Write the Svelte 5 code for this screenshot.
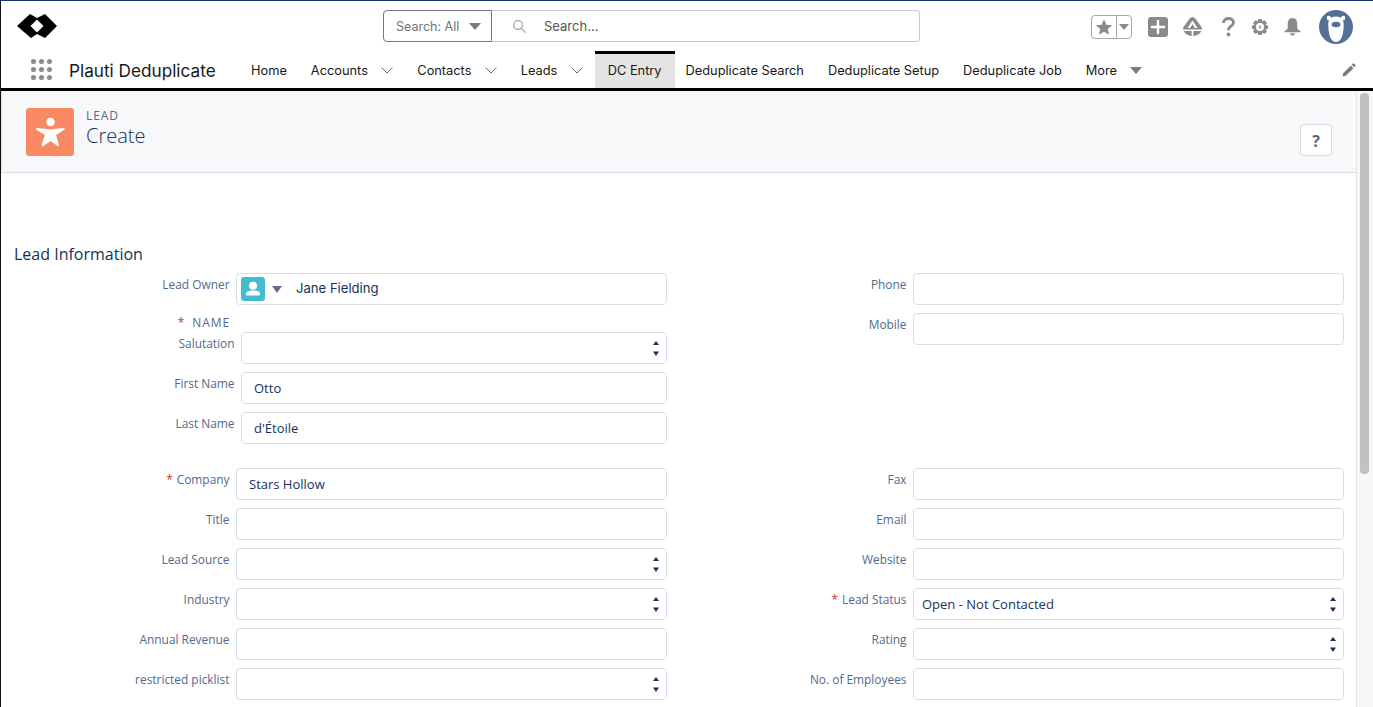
<script>
  const nav = [
    { label: 'Home' },
    { label: 'Accounts', menu: true },
    { label: 'Contacts', menu: true },
    { label: 'Leads', menu: true },
    { label: 'DC Entry', active: true },
    { label: 'Deduplicate Search' },
    { label: 'Deduplicate Setup' },
    { label: 'Deduplicate Job' }
  ]

  const topLeft = [
    { label: 'Salutation', select: true },
    { label: 'First Name', value: 'Otto' },
    { label: 'Last Name', value: "d'Étoile" }
  ]

  const lower = [
    [
      { label: 'Company', value: 'Stars Hollow', required: true },
      { label: 'Title' },
      { label: 'Lead Source', select: true },
      { label: 'Industry', select: true },
      { label: 'Annual Revenue' },
      { label: 'restricted picklist', select: true }
    ],
    [
      { label: 'Fax' },
      { label: 'Email' },
      { label: 'Website' },
      { label: 'Lead Status', value: 'Open - Not Contacted', select: true, required: true },
      { label: 'Rating', select: true },
      { label: 'No. of Employees' }
    ]
  ]
</script>

{#snippet field(f)}
  <div class="row">
    <div class="label">
      {#if f.required}<span class="req">*</span>{/if}{f.label}
    </div>
    <div class="input" class:select={f.select}>
      {f.value ?? ''}
      {#if f.select}
        <svg class="updown" viewBox="0 0 6 15" width="6" height="15">
          <path d="M3 0 L6 4 H0 Z M0 10.500 H6 L3 15 Z" fill="#16325c" />
        </svg>
      {/if}
    </div>
  </div>
{/snippet}

<div class="app">
  <header class="global">
    <svg class="logo" viewBox="0 0 40 24" width="40" height="24">
      <path d="M0 12 L13 0 L20 4 L28 0 L40 12 L28 24 L20 20 L14 24 Z" fill="#000" />
      <path d="M20 5.500 L26.500 12 L20 18.500 L13.500 12 Z" fill="#fff" />
    </svg>

    <div class="search">
      <div class="scope">Search: All <span class="tri"></span></div>
      <div class="box">
        <svg viewBox="0 0 16 16" width="15" height="15" fill="none" stroke="#a8a8a8" stroke-width="1.400">
          <circle cx="6.500" cy="6.500" r="4.700" />
          <path d="M10 10 L14.500 14.500" />
        </svg>
        <span>Search...</span>
      </div>
    </div>

    <div class="tools">
      <div class="fav">
        <span class="fav-star">
          <svg viewBox="0 0 20 20" width="18" height="18">
            <path d="M10 1.500 L12.600 7.500 L19 8 L14.200 12.200 L15.700 18.500 L10 15.200 L4.300 18.500 L5.800 12.200 L1 8 L7.400 7.500 Z" fill="#8a8a8a" />
          </svg>
        </span>
        <span class="fav-drop"><span class="tri small"></span></span>
      </div>
      <svg class="plus" viewBox="0 0 20 20" width="20" height="20">
        <rect width="20" height="20" rx="3" fill="#8a8a8a" />
        <path d="M10 4 V16 M4 10 H16" stroke="#fff" stroke-width="2.400" stroke-linecap="round" />
      </svg>
      <svg class="trail" viewBox="0 0 19 19" width="19" height="19">
        <path d="M9.500 0 Q11 0 12.500 1.800 L17.800 9 Q19.200 11.200 19 12.600 H0 Q-0.200 11.200 1.200 9 L6.500 1.800 Q8 0 9.500 0 Z" fill="#8a8a8a" />
        <path d="M9.500 3.500 L14.500 11 H4.500 Z" fill="#fff" />
        <path d="M9.500 7 L11.800 11 H7.200 Z" fill="#8a8a8a" />
        <path d="M0.500 14 H8.500 L8.800 19 Q3 18.500 0.500 14 Z M10.500 14 H18.500 Q16 18.500 10.200 19 Z" fill="#8a8a8a" />
      </svg>
      <svg class="help" viewBox="0 0 13 20" width="13" height="20">
        <path d="M1.500 6 C1.500 3 3.800 1.500 6.500 1.500 C9.300 1.500 11.500 3 11.500 5.500 C11.500 7.800 9.800 8.600 8.300 9.700 C7 10.700 6.500 11.500 6.500 13.200" fill="none" stroke="#8a8a8a" stroke-width="2.800" />
        <circle cx="6.500" cy="17.500" r="1.900" fill="#8a8a8a" />
      </svg>
      <svg class="gear" viewBox="0 0 20 20" width="18" height="18">
        <path d="M8 1 H12 L12.500 3.600 L15 2.500 L17.800 5.500 L16.300 7.800 L19 8.500 V12 L16.300 12.500 L17.800 15 L15 17.800 L12.500 16.500 L12 19 H8 L7.500 16.500 L5 17.800 L2.200 15 L3.700 12.500 L1 12 V8.500 L3.700 7.800 L2.200 5.500 L5 2.500 L7.500 3.600 Z" fill="#8a8a8a" />
        <circle cx="10" cy="10" r="4.500" fill="#fff" />
        <path d="M11 6.800 L8.200 10.500 H10 L9 13.200 L11.800 9.500 H10 Z" fill="#8a8a8a" />
      </svg>
      <svg class="bell" viewBox="0 0 20 20" width="19" height="19">
        <path d="M10 1 C13.500 1 15 4 15 7 V11 C15 13 17 14 18.500 15 V16 H1.500 V15 C3 14 5 13 5 11 V7 C5 4 6.500 1 10 1 Z M7.500 17 H12.500 C12.500 18.500 11.200 19.500 10 19.500 C8.800 19.500 7.500 18.500 7.500 17 Z" fill="#8a8a8a" />
      </svg>
      <svg class="avatar" viewBox="0 0 34 34" width="34" height="34">
        <circle cx="17" cy="17" r="17" fill="#557096" />
        <circle cx="9.800" cy="8" r="2.200" fill="#fff" />
        <circle cx="24.200" cy="8" r="2.200" fill="#fff" />
        <path d="M17 6.500 C23 6.500 25 10 24.700 16 C24.400 23 23 32 17 32 C11 32 9.600 23 9.300 16 C9 10 11 6.500 17 6.500 Z" fill="#fff" />
        <ellipse cx="17" cy="14.500" rx="4.500" ry="2.800" fill="#557096" />
      </svg>
    </div>
  </header>

  <nav class="appnav">
    <div class="waffle">
      {#each Array(9) as _}<i></i>{/each}
    </div>
    <div class="appname">Plauti Deduplicate</div>
    <div class="items">
      {#each nav as item}
        <div class="item" class:active={item.active} class:menu={item.menu}>
          {item.label}
          {#if item.menu}
            <svg viewBox="0 0 12 7" width="12" height="7" fill="none" stroke="#6e6e6e" stroke-width="1">
              <path d="M0.500 0.500 L6 6 L11.500 0.500" />
            </svg>
          {/if}
        </div>
      {/each}
      <div class="item more">More <span class="tri"></span></div>
    </div>
    <svg class="pencil" viewBox="0 0 14 14" width="14" height="14">
      <path d="M0.500 13.500 L1.200 10.200 L8.800 2.600 L11.400 5.200 L3.800 12.800 Z M9.700 1.700 L10.800 0.600 Q11.400 0.200 12 0.600 L13.400 2 Q13.800 2.600 13.400 3.200 L12.300 4.300 Z" fill="#7a7a7a" />
    </svg>
  </nav>

  <div class="body">
    <main>
      <div class="page-head">
        <div class="lead-icon">
          <svg viewBox="0 0 48 48" width="48" height="48">
            <circle cx="24.500" cy="14" r="4.300" fill="#fff" />
            <path d="M10 21.500 Q9.500 20 11.500 20 L24.500 21.500 L37.500 20 Q39.500 20 38.500 21.500 L30 27 L33 37 Q33 38.500 31.500 38 L24.500 33 L17.500 38 Q16 38.500 15.500 37 L19 27 Z" fill="#fff" />
          </svg>
        </div>
        <div class="titles">
          <div class="kicker">LEAD</div>
          <h1>Create</h1>
        </div>
        <button class="help-btn">?</button>
      </div>

      <h2>Lead Information</h2>

      <div class="columns upper">
        <div>
          <div class="row">
            <div class="label">Lead Owner</div>
            <div class="input owner">
              <span class="owner-icon">
                <svg viewBox="0 0 24 24" width="24" height="24">
                  <circle cx="12" cy="8.800" r="4" fill="#fff" />
                  <path d="M5 16.500 C5 14.500 8 13.500 12 13.500 C16 13.500 19 14.500 19 16.500 V17.500 Q19 18.500 18 18.500 H6 Q5 18.500 5 17.500 Z" fill="#fff" />
                </svg>
              </span>
              <span class="tri slate"></span>
              <span class="owner-name">Jane Fielding</span>
            </div>
          </div>
          <div class="name-head"><span class="req">*</span>NAME</div>
          <div class="name-rows">
            {#each topLeft as f}
              {@render field(f)}
            {/each}
          </div>
        </div>
        <div>
          {@render field({ label: 'Phone' })}
          {@render field({ label: 'Mobile' })}
        </div>
      </div>

      <div class="columns">
        {#each lower as col}
          <div>
            {#each col as f}
              {@render field(f)}
            {/each}
          </div>
        {/each}
      </div>
    </main>
    <div class="scrollbar"><div class="thumb"></div></div>
  </div>
</div>

<style>
  :global(body) {
    margin: 0;
    background: #fff;
    overflow: hidden;
  }

  .app {
    height: 707px;
    overflow: hidden;
    display: flex;
    flex-direction: column;
    box-sizing: border-box;
    border-top: 1px solid #14346b;
    border-left: 1px solid #111;
    font-family: Inter, "Liberation Sans", sans-serif;
  }

  .global {
    height: 51px;
    flex: none;
    display: flex;
    align-items: center;
    padding-left: 16px;
    padding-right: 20px;
    position: relative;
  }

  .logo {
    flex: none;
    margin-top: -1px;
  }

  .search {
    display: flex;
    margin-left: 326px;
    width: 537px;
    height: 32px;
    margin-top: -1px;
    font-size: 12.500px;
    color: #737373;
  }

  .scope {
    width: 109px;
    flex: none;
    box-sizing: border-box;
    border: 1px solid #777;
    border-radius: 4px 0 0 4px;
    padding-left: 12px;
    display: flex;
    align-items: center;
    gap: 10px;
    white-space: nowrap;
  }

  .box {
    flex: 1;
    border: 1px solid #c9c9c9;
    border-left: 0;
    border-radius: 0 4px 4px 0;
    display: flex;
    align-items: center;
    padding-left: 20px;
    gap: 17px;
    color: #555;
    font-size: 13px;
  }

  .tri {
    display: inline-block;
    width: 0;
    height: 0;
    border-left: 6px solid transparent;
    border-right: 6px solid transparent;
    border-top: 7px solid #7a7a7a;
  }

  .tri.small {
    border-left-width: 5px;
    border-right-width: 5px;
    border-top-width: 6px;
    border-top-color: #8a8a8a;
  }

  .tri.slate {
    border-top-color: #5c6f90;
    border-left-width: 5.500px;
    border-right-width: 5.500px;
  }

  .tools {
    margin-left: auto;
    display: flex;
    align-items: center;
  }

  .fav {
    display: flex;
    width: 41px;
    height: 24px;
    box-sizing: border-box;
    border: 1px solid #a8a8a8;
    border-radius: 4px;
    margin-right: 16px;
  }

  .fav-star {
    width: 24px;
    display: flex;
    align-items: center;
    justify-content: center;
    border-right: 1px solid #a8a8a8;
  }

  .fav-drop {
    flex: 1;
    display: flex;
    align-items: center;
    justify-content: center;
  }

  .plus { margin-right: 15px; }
  .trail { margin-right: 20px; }
  .help { margin-right: 16px; }
  .gear { margin-right: 14px; }
  .bell { margin-right: 17px; }

  .appnav {
    height: 36px;
    flex: none;
    display: flex;
    align-items: stretch;
    border-bottom: 3px solid #000;
    padding-left: 30px;
    position: relative;
  }

  .waffle {
    width: 21px;
    align-self: center;
    display: grid;
    grid-template-columns: repeat(3, 5px);
    gap: 3px;
    margin-top: -1px;
  }

  .waffle i {
    width: 5px;
    height: 5px;
    border-radius: 50%;
    background: #8a8a8a;
  }

  .appname {
    margin-left: 17px;
    align-self: center;
    font-size: 17.200px;
    color: #181818;
    width: 170px;
    white-space: nowrap;
  }

  .items {
    display: flex;
    align-items: stretch;
    font-size: 12.800px;
    color: #181818;
  }

  .item {
    display: flex;
    align-items: center;
    padding: 0 12px;
    white-space: nowrap;
    border-top: 3px solid transparent;
    padding-bottom: 3px;
  }

  .item.menu {
    gap: 13.350px;
  }

  .item.active {
    background: #e4e4e4;
    border-top-color: #000;
    margin-top: -1px;
    padding-left: 13px;
    padding-right: 13px;
    padding-bottom: 2px;
    margin-right: -1px;
  }

  .more {
    gap: 13px;
  }

  .pencil {
    margin-left: auto;
    margin-right: 17px;
    align-self: center;
  }

  .body {
    flex: 1;
    display: flex;
    min-height: 0;
  }

  main {
    flex: 1;
    min-width: 0;
  }

  .page-head {
    height: 82px;
    box-sizing: border-box;
    background: #f7f8fa;
    border-bottom: 1px solid #d8dde6;
    display: flex;
    padding: 17px 25px 0 24px;
    border-left: 1px solid #dfe3ea;
  }

  .lead-icon {
    width: 48px;
    height: 48px;
    border-radius: 3px;
    background: #f88962;
    flex: none;
  }

  .titles {
    margin-left: 12px;
    color: #16325c;
  }

  .kicker {
    font-family: "Open Sans", sans-serif;
    font-size: 12px;
    line-height: 14px;
    margin-top: 1px;
    color: #54698d;
    letter-spacing: 0.900px;
  }

  h1 {
    margin: 0;
    font-family: "Open Sans", sans-serif;
    font-weight: 300;
    font-size: 20px;
    line-height: 26px;
    color: #16325c;
  }

  .help-btn {
    margin-left: auto;
    margin-top: 16px;
    width: 32px;
    height: 32px;
    background: #fff;
    border: 1px solid #d8dde6;
    border-radius: 4px;
    color: #54698d;
    font-family: "Open Sans", sans-serif;
    font-size: 16px;
    font-weight: 700;
    padding: 1px 0 0;
    margin-right: -1px;
  }

  h2 {
    margin: 70px 0 0 13px;
    font-family: "Open Sans", sans-serif;
    font-weight: 400;
    font-size: 16px;
    line-height: 22px;
    height: 30px;
    color: #16325c;
  }

  .columns {
    display: grid;
    grid-template-columns: 666px 677px;
    width: 1343px;
    font-family: "Open Sans", sans-serif;
  }

  .columns.upper {
    height: 195px;
  }

  .row {
    display: flex;
    height: 32px;
    margin-bottom: 8px;
  }

  .label {
    flex: 1;
    text-align: right;
    padding-right: 6.500px;
    padding-top: 3px;
    font-size: 11.900px;
    line-height: 16px;
    color: #54698d;
    white-space: nowrap;
  }

  .req {
    color: #c23934;
    margin-right: 4px;
  }

  .input {
    width: 431px;
    flex: none;
    box-sizing: border-box;
    border: 1px solid #d8dde6;
    border-radius: 4px;
    background: #fff;
    display: flex;
    align-items: center;
    padding-left: 12px;
    font-size: 13px;
    color: #16325c;
    position: relative;
  }

  .input.select {
    padding-left: 8px;
  }

  .updown {
    position: absolute;
    right: 7px;
    top: 8px;
  }

  .owner {
    padding-left: 4px;
  }

  .owner-icon {
    width: 24px;
    height: 24px;
    border-radius: 3px;
    background: #44bcd0;
    margin-right: 7px;
    flex: none;
  }

  .owner-name {
    margin-left: 14px;
    margin-bottom: 2px;
    font-family: Inter, sans-serif;
    font-size: 13.100px;
  }

  .name-head {
    font-size: 12px;
    line-height: 14px;
    height: 19px;
    color: #54698d;
    letter-spacing: 0.900px;
    text-align: right;
    padding-right: 437px;
    padding-top: 3px;
    box-sizing: border-box;
  }

  .name-head .req {
    margin-right: 7px;
  }

  .name-rows .input {
    width: 426px;
  }

  .scrollbar {
    width: 17px;
    box-sizing: border-box;
    flex: none;
    background: #f7f7f7;
    border-left: 1px solid #e6e6e6;
    padding: 2px 4px 0 3px;
  }

  .thumb {
    height: 381px;
    border-radius: 4px;
    background: #c1c1c1;
  }
</style>
